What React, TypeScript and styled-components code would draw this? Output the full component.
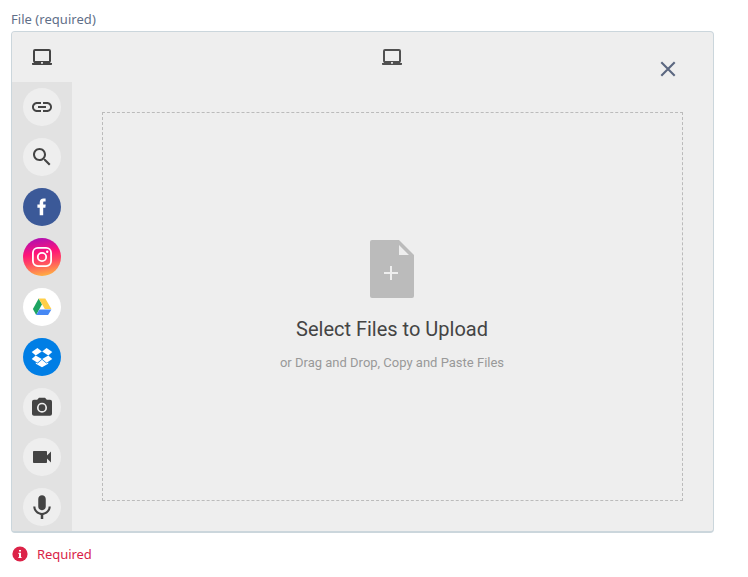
import React from 'react';
import styled, { createGlobalStyle } from 'styled-components';

const GlobalStyle = createGlobalStyle`
  * { box-sizing: border-box; }
  body { margin: 0; background: #fff; }
`;

const Field = styled.div`
  display: flex;
  flex-direction: column;
  padding: 9px 34px 0 11px;
  font-family: 'Noto Sans', 'Open Sans', sans-serif;
`;

const Label = styled.label`
  height: 22px;
  font-size: 13px;
  line-height: 20px;
  letter-spacing: 0.04px;
  color: #5f6f88;
  white-space: nowrap;
`;

const Picker = styled.section`
  display: flex;
  height: 502px;
  border: 1px solid #cbd6dc;
  border-bottom-width: 2px;
  border-radius: 4px;
  background: #eee;
  overflow: hidden;
`;

const Sidebar = styled.nav`
  display: flex;
  flex-direction: column;
  width: 60px;
  flex: none;
  background: #e2e2e2;
`;

const Source = styled.button<{ $active?: boolean }>`
  display: flex;
  align-items: center;
  justify-content: center;
  width: 60px;
  height: 50px;
  flex: none;
  padding: 0;
  border: 0;
  background: ${(p) => (p.$active ? '#eee' : 'transparent')};
`;

const Disc = styled.span<{ $fill?: string }>`
  display: flex;
  align-items: center;
  justify-content: center;
  width: 38px;
  height: 38px;
  border-radius: 50%;
  background: ${(p) => p.$fill ?? '#eee'};
`;

const Main = styled.div`
  display: flex;
  flex-direction: column;
  flex: 1;
  padding: 0 30px 30px;
`;

const Header = styled.header`
  display: grid;
  grid-template-columns: 1fr 25px 1fr;
  height: 80px;
  flex: none;
`;

const HeaderIcon = styled.div`
  grid-column: 2;
  display: flex;
  justify-content: flex-start;
  padding-top: 13px;
`;

const CloseButton = styled.button`
  justify-self: end;
  align-self: start;
  display: flex;
  margin: 29px 7px 0 0;
  padding: 0;
  border: 0;
  background: none;
`;

const DropZone = styled.div`
  display: flex;
  flex-direction: column;
  align-items: center;
  flex: 1;
  padding: 127px 1px 0 0;
  border: 1px dashed #bbb;
  font-family: Roboto, sans-serif;
`;

const Title = styled.div`
  margin-top: 19px;
  font-size: 20px;
  line-height: 24px;
  color: #444;
`;

const Hint = styled.div`
  margin-top: 13px;
  font-size: 13px;
  line-height: 18px;
  color: #999;
`;

const ErrorLine = styled.div`
  display: flex;
  align-items: center;
  gap: 9px;
  height: 20px;
  margin-top: 11px;
  padding-left: 1px;
  font-size: 13px;
  line-height: 20px;
  letter-spacing: -0.06px;
  color: #d91e48;
`;

const Svg = styled.svg`
  display: block;
  flex: none;
`;

const Laptop = ({ color = '#444' }: { color?: string }) => (
  <Svg width="24" height="24" viewBox="0 0 24 24">
    <rect x="4" y="5" width="16" height="12" rx="1" fill="none" stroke={color} strokeWidth="2" />
    <path fill={color} d="M4 16.2h7v1.8H4zM13 16.2h7v1.8h-7zM2 18h20v1.2q0 .8-.8.8H2.8Q2 20 2 19.2z" />
    <path fill="#ddd" d="M11 17h2v1.7h-2z" />
  </Svg>
);

const Glyph = ({ d, size = 24, color = '#444' }: { d: string; size?: number; color?: string }) => (
  <Svg width={size} height={size} viewBox="0 0 24 24">
    <path d={d} fill={color} />
  </Svg>
);

const paths = {
  link: 'M3.9 12c0-1.71 1.39-3.1 3.1-3.1h4V7H7c-2.76 0-5 2.24-5 5s2.24 5 5 5h4v-1.9H7c-1.71 0-3.1-1.39-3.1-3.1zM8 13h8v-2H8v2zm9-6h-4v1.9h4c1.71 0 3.1 1.39 3.1 3.1s-1.39 3.1-3.1 3.1h-4V17h4c2.76 0 5-2.24 5-5s-2.24-5-5-5z',
  search: 'M15.5 14h-.79l-.28-.27C15.41 12.59 16 11.11 16 9.5 16 5.91 13.09 3 9.5 3S3 5.91 3 9.5 5.91 16 9.5 16c1.61 0 3.09-.59 4.23-1.57l.27.28v.79l5 4.99L20.49 19l-4.99-5zm-6 0C7.01 14 5 11.99 5 9.5S7.01 5 9.5 5 14 7.01 14 9.5 11.99 14 9.5 14z',
  video: 'M17 10.5V7c0-.55-.45-1-1-1H4c-.55 0-1 .45-1 1v10c0 .55.45 1 1 1h12c.55 0 1-.45 1-1v-3.5l4 4v-11l-4 4z',
  mic: 'M12 14.6c1.66 0 3-1.34 3-3v-6c0-1.66-1.34-3-3-3s-3 1.34-3 3v6c0 1.66 1.34 3 3 3zm5.3-3c0 3-2.54 5.1-5.3 5.1s-5.3-2.1-5.3-5.1H5c0 3.41 2.72 6.23 6 6.72v3.28h2v-3.28c3.28-.48 6-3.3 6-6.72z',
  facebook: 'M9.7 20.2v-7.4H7.4V9.6h2.3V7.5c0-2.6 1.5-4.1 3.9-4.1.8 0 1.6.1 2 .2v2.8h-1.3c-1 0-1.1.5-1.1 1.2v2h2.5l-.3 3.2h-2.2v7.4z',
};

const Camera = () => (
  <Svg width="24" height="24" viewBox="0 -0.7 24 24">
    <path fill="#444" d="M9 2 7.2 4H4a2 2 0 0 0-2 2v12c0 1.1.9 2 2 2h16a2 2 0 0 0 2-2V6a2 2 0 0 0-2-2h-3.2L15 2z" />
    <circle cx="12" cy="12" r="4.2" fill="none" stroke="#eee" strokeWidth="1.7" />
  </Svg>
);

const Instagram = () => (
  <Svg width="24" height="24" viewBox="0 0 24 24" fill="none" stroke="#fff" strokeWidth="1.8">
    <rect x="2.9" y="2.9" width="18.2" height="18.2" rx="5" />
    <circle cx="12" cy="12" r="4.2" />
    <circle cx="17.2" cy="6.8" r="1.2" fill="#fff" stroke="none" />
  </Svg>
);

const Drive = () => (
  <Svg width="24" height="24" viewBox="0 0 24 24">
    <path fill="#1da462" d="M8.7 3.5 12 9.3 6.2 19.9 2.9 14z" />
    <path fill="#ffcf48" d="M8.7 3.5h6.6L21.4 14h-6.6z" />
    <path fill="#4688f4" d="M9.4 14.5h12l-3.3 5.6H6.2z" />
  </Svg>
);

const Dropbox = () => (
  <Svg width="24" height="24" viewBox="0 0 24 24" fill="#fff">
    <path d="m7.4 3 4.4 3.6-6.1 3.8L1.7 7z" />
    <path d="m16.6 3-4.4 3.6 6.1 3.8 4-3.4z" />
    <path d="m5.7 10.4 6.1 3.7-4.4 3.6-5.7-3.8z" />
    <path d="m18.3 10.4-6.1 3.7 4.4 3.6 5.7-3.8z" />
    <path d="m12 14.8 4.5 3.7 1.7-1.1v1.3L12 22.3l-6.2-3.6v-1.3l1.7 1.1z" />
  </Svg>
);

const FileIcon = () => (
  <Svg width="44" height="58" viewBox="0 0 44 58">
    <path fill="#bbb" d="M2 0h27l15 15v41q0 2-2 2H2q-2 0-2-2V2Q0 0 2 0z" />
    <path fill="#eee" d="M29 5v10h10zM20 26h2v6h6v2h-6v6h-2v-6h-6v-2h6z" />
  </Svg>
);

const CloseIcon = () => (
  <Svg width="16" height="16" viewBox="0 0 16 16">
    <path d="m1.3 1.3 13.4 13.4M14.7 1.3 1.3 14.7" stroke="#5b6780" strokeWidth="2.1" />
  </Svg>
);

const AlertIcon = () => (
  <Svg width="16" height="16" viewBox="0 0 16 16">
    <circle cx="8" cy="8" r="7.6" fill="#dc2348" />
    <path fill="#fff" d="M7 3.9h2v1.7H7zM6.4 6.8H9v4.1h.6v1.1H6.4v-1.1H7V7.9h-.6z" />
  </Svg>
);

const sources: { name: string; icon: React.ReactNode; fill?: string }[] = [
  { name: 'Link', icon: <Glyph d={paths.link} /> },
  { name: 'Web search', icon: <Glyph d={paths.search} /> },
  { name: 'Facebook', icon: <Glyph d={paths.facebook} color="#fff" />, fill: '#3b5998' },
  {
    name: 'Instagram',
    icon: <Instagram />,
    fill: 'linear-gradient(170deg, #a80fb7 3%, #ff1478 40%, #ff4a62 62%, #ffb640 95%)',
  },
  { name: 'Google Drive', icon: <Drive />, fill: '#fff' },
  { name: 'Dropbox', icon: <Dropbox />, fill: '#007ee5' },
  { name: 'Camera', icon: <Camera /> },
  { name: 'Video', icon: <Glyph d={paths.video} /> },
  { name: 'Audio', icon: <Glyph d={paths.mic} size={30} /> },
];

export default function App() {
  return (
    <>
      <GlobalStyle />
      <Field>
        <Label>File (required)</Label>
        <Picker>
          <Sidebar>
            <Source $active aria-label="My device">
              <Laptop />
            </Source>
            {sources.map((s) => (
              <Source key={s.name} aria-label={s.name}>
                <Disc $fill={s.fill}>{s.icon}</Disc>
              </Source>
            ))}
          </Sidebar>
          <Main>
            <Header>
              <HeaderIcon>
                <Laptop color="#505050" />
              </HeaderIcon>
              <CloseButton aria-label="Close">
                <CloseIcon />
              </CloseButton>
            </Header>
            <DropZone>
              <FileIcon />
              <Title>Select Files to Upload</Title>
              <Hint>or Drag and Drop, Copy and Paste Files</Hint>
            </DropZone>
          </Main>
        </Picker>
        <ErrorLine>
          <AlertIcon />
          <span>Required</span>
        </ErrorLine>
      </Field>
    </>
  );
}
